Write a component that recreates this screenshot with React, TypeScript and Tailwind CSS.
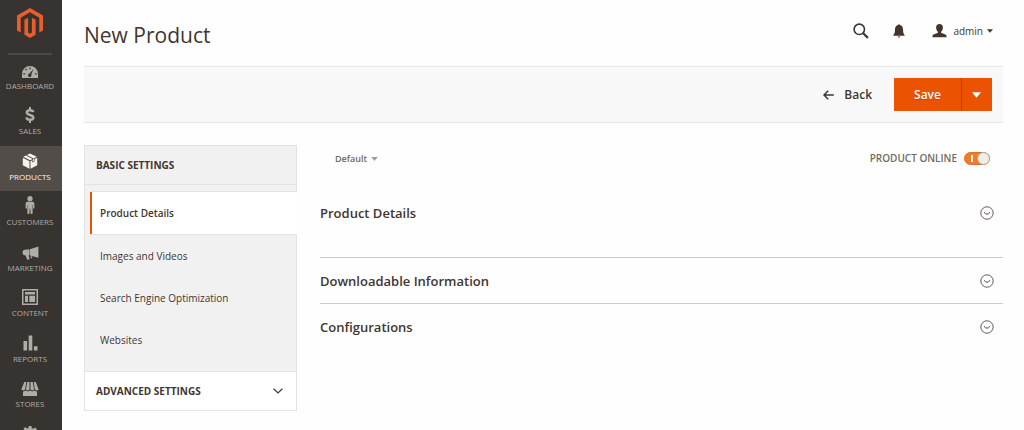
import React, { useState } from "react";

const iconProps = { fill: "currentColor", "aria-hidden": true } as const;

function Logo() {
  return (
    <svg viewBox="0 0 26 30" className="h-[30px] w-[26px]" fill="#eb5d2a" aria-hidden="true">
      <path d="M13 0 26 7.6v14.9l-3.7 2.1V9.7L13 4.3 3.7 9.7v14.9L0 22.5V7.6z" />
      <path d="M7.4 11.8 11.1 9.7v14.9l1.9 1.1 1.9-1.1V9.7l3.7 2.1v14.9L13 30l-5.6-3.3z" />
    </svg>
  );
}

const DashboardIcon = () => (
  <svg {...iconProps} viewBox="0 0 16 12" className="h-3 w-4">
    <path
      fillRule="evenodd"
      d="M0 12V8a8 8 0 0 1 16 0v4zM7.4 1.4v1.8h1.2V1.4zM3 3.4l1.2 1.2.9-.8L3.9 2.6zM1.3 7.3v1.2h1.8V7.3zM12.9 7.3v1.2h1.8V7.3zM11.6 2.7 7.6 7.6a1.7 1.7 0 1 0 1.7 1z"
    />
  </svg>
);

const SalesIcon = () => (
  <svg viewBox="0 0 10 16" className="h-4 w-2.5" fill="none" stroke="currentColor" strokeWidth="2.6" aria-hidden="true">
    <path d="M8.2 5.200C8 3.700 7 3.200 5 3.200S1.800 3.900 1.800 5.300C1.800 8.600 8.300 7.200 8.300 10.500c0 1.500-1.300 2.300-3.300 2.300s-3.300-.8-3.500-2.400" />
    <path d="M5 0v3.500M5 12.500V16" strokeWidth="2" />
  </svg>
);

const ProductsIcon = () => (
  <svg {...iconProps} viewBox="0 0 16 16" className="h-4 w-4">
    <path d="M.8 4.8 7.5 8.2v7.6L.8 12.2zM15.2 4.8 8.5 8.2v7.6l6.7-3.6z" />
    <path d="M1.3 3.8 3.9 2.5l6.8 3.4L8 7.3zM4.9 2 8 .4l6.7 3.4-3 1.6z" />
    <path d="M10.4 6.4 12.8 5v3.3l-2.4 1.3z" fill="#524d49" />
    <path d="M11.1 6.3 12.3 5.6v2.3l-1.2.7z" />
  </svg>
);

const CustomersIcon = () => (
  <svg {...iconProps} viewBox="0 0 10 18" className="h-[18px] w-2.5">
    <circle cx="5" cy="2.7" r="2.6" />
    <path d="M2.4 5.8h5.2C8.8 5.8 9.4 7 9.4 8v3.900c0 .8-1.300.8-1.400 0V9h-.4v8.200c0 1-2 1-2.100 0l-.2-4.800h-.6l-.2 4.800c-.1 1-2.100 1-2.100 0V9H2v2.900c-.1.8-1.400.8-1.400 0V8c0-1 .6-2.200 1.800-2.200z" />
  </svg>
);

const MarketingIcon = () => (
  <svg {...iconProps} viewBox="0 0 17 14" className="h-3.5 w-[17px]">
    <path d="M16.4.4v11.400L8 9.400V3.200zM7.500 3.300v6H2.800C-.2 9.200-.2 3.800 2.800 3.800zM3.600 9.300h3l1 4.300H5z" />
    <path d="M8.400 10.100l2 .6-.6 1.500H8.900z" />
  </svg>
);

const ContentIcon = () => (
  <svg {...iconProps} viewBox="0 0 16 16" className="h-4 w-4">
    <path fillRule="evenodd" d="M0 0h16v16H0zM1.5 1.5v13h13v-13zM3 3h10v2.6H3zM3 6.8h3V13H3zM7.3 6.8H13V13H7.3z" />
  </svg>
);

const ReportsIcon = () => (
  <svg {...iconProps} viewBox="0 0 15 16" className="h-4 w-[15px]">
    <path d="M.5 6h3.6v9.6H.5zM5.7.4h3.6v15.2H5.7zM10.9 11.2h3.6v4.4h-3.6z" />
  </svg>
);

const StoresIcon = () => (
  <svg {...iconProps} viewBox="0 0 18 14" className="h-3.5 w-[18px]">
    <path d="M3.3 0h2L4.2 7.1c-.3 1.700-3.600 1.900-3.800.2zM6.300 0h2.200v7.100c0 1.700-3.500 1.700-3.500 0zM9.500 0h2.200l1.300 7.100c0 1.700-3.500 1.700-3.500 0zM12.700 0h2l2.900 7.300c-.2 1.700-3.500 1.500-3.800-.2z" />
    <path d="M2 9.400c1 .1 2-.2 2.700-.8 1.100 1 3.100 1.100 4.300 0 1.200 1.100 3.200 1 4.300 0 .7.6 1.700.9 2.700.8V14H2z" />
  </svg>
);

const SystemIcon = () => (
  <svg {...iconProps} viewBox="0 0 16 16" className="h-4 w-4">
    <path
      fillRule="evenodd"
      d="M6.700 0h2.600l.5 2.300 1.300.5 2-1.300 1.800 1.800-1.300 2 .5 1.300 2.300.5v2.600l-2.300.5-.5 1.300 1.300 2-1.800 1.800-2-1.300-1.300.5-.5 2.300H6.700l-.5-2.300-1.300-.5-2 1.300-1.800-1.800 1.300-2-.5-1.300L0 9.300V6.700l2.300-.5.5-1.300-1.300-2 1.800-1.800 2 1.300 1.300-.5zM8 5.300a2.700 2.700 0 1 0 0 5.400 2.700 2.700 0 0 0 0-5.400z"
    />
  </svg>
);

const menu = [
  { name: "Dashboard", Icon: DashboardIcon },
  { name: "Sales", Icon: SalesIcon },
  { name: "Products", Icon: ProductsIcon, active: true },
  { name: "Customers", Icon: CustomersIcon },
  { name: "Marketing", Icon: MarketingIcon },
  { name: "Content", Icon: ContentIcon },
  { name: "Reports", Icon: ReportsIcon },
  { name: "Stores", Icon: StoresIcon },
  { name: "System", Icon: SystemIcon, iconOnly: true },
];

function Sidebar() {
  return (
    <nav className="sticky top-0 flex h-screen w-[62px] shrink-0 flex-col overflow-hidden bg-[#373330]" aria-label="Main">
      <a href="#" aria-label="Home" className="mr-2.5 ml-2 flex h-[55px] shrink-0 justify-center border-b-2 border-[#4b4744] pt-2">
        <Logo />
      </a>
      <ul className="grid h-[409px] shrink-0 auto-rows-fr">
        {menu.map(({ name, Icon, active, iconOnly }) => (
          <li key={name}>
            <a
              href="#"
              aria-label={name}
              className={
                "flex h-full flex-col items-center pr-0.5 text-[8px] leading-[14px] uppercase " +
                (active ? "bg-[#524d49] text-[#f7f3eb]" : "text-[#b0aca6]")
              }
            >
              <span className="flex h-6 items-end justify-center pb-px">
                <Icon />
              </span>
              {!iconOnly && name}
            </a>
          </li>
        ))}
      </ul>
    </nav>
  );
}

const Caret = ({ className }: { className: string }) => (
  <svg {...iconProps} viewBox="0 0 10 6" className={className}>
    <path d="M0 0h10L5 6z" />
  </svg>
);

function Header() {
  return (
    <header className="flex h-[66px] items-start justify-between pr-2.5">
      <h1 className="pt-[21px] text-[21px] leading-7 text-[#41362f]">New Product</h1>
      <div className="flex h-[62px] items-center text-[#41362f]">
        <button type="button" aria-label="Search">
          <svg viewBox="0 0 16 16" className="h-4 w-4" fill="none" stroke="currentColor" aria-hidden="true">
            <circle cx="6.300" cy="6.300" r="5.200" strokeWidth="1.600" />
            <path d="m10.200 10.200 4.700 4.700" strokeWidth="2.200" />
          </svg>
        </button>
        <button type="button" aria-label="Notifications" className="ml-6">
          <svg {...iconProps} viewBox="0 0 12 14" className="h-3.5 w-3">
            <path d="M6 .3c.6 0 .9.300.9.800C9 1.600 9.900 3.200 10 5.200c.1 3 .4 4.500 1.600 5.800v.8H.4V11C1.600 9.700 1.900 8.200 2 5.200c.1-2 1-3.600 3.100-4.100 0-.5.3-.8.9-.8zM4.600 12.400h2.800c-.2 1.500-2.600 1.500-2.800 0z" />
          </svg>
        </button>
        <button type="button" className="ml-[27px] flex items-center text-[10px] leading-4 text-[#41362f]">
          <svg {...iconProps} viewBox="0 0 15 14" className="h-3.5 w-[15px]">
            <path d="M7.500 0c2.200 0 3.400 1.500 3.400 3.500 0 1.900-.8 3.400-1.700 4.100v1.300c2.500.9 5.300 1.300 5.300 3.300v1H.5v-1c0-2 2.800-2.400 5.300-3.300V7.600C4.900 6.900 4.100 5.400 4.100 3.500 4.100 1.500 5.300 0 7.500 0z" />
          </svg>
          <span className="ml-1.5">admin</span>
          <Caret className="ml-1 h-1 w-1.5" />
        </button>
      </div>
    </header>
  );
}

function Toolbar() {
  return (
    <div className="flex h-[57px] items-center justify-end border-y border-[#e6e6e6] bg-[#f8f8f8] pr-[11px]">
      <button type="button" className="flex items-center text-[12px] leading-5 font-semibold text-[#41362f]">
        <svg viewBox="0 0 11 10" className="mr-2.5 h-2.5 w-[11px]" fill="none" stroke="currentColor" strokeWidth="1.500" aria-hidden="true">
          <path d="M5.200.700 1 5l4.200 4.300M1 5h9.800" />
        </svg>
        Back
      </button>
      <div className="ml-[22px] flex h-[33px] text-white">
        <button type="button" className="w-[67px] bg-[#eb5202] text-[12px] leading-5 font-semibold text-shadow-xs">
          Save
        </button>
        <button type="button" aria-label="More save options" className="flex w-[31px] items-center justify-center border-l border-[#b84002] bg-[#eb5202] pr-0.5">
          <Caret className="h-1.5 w-[9px]" />
        </button>
      </div>
    </div>
  );
}

const tabs = ["Product Details", "Images and Videos", "Search Engine Optimization", "Websites"];

function SettingsTabs() {
  const [current, setCurrent] = useState(tabs[0]);
  return (
    <aside className="w-[213px] shrink-0 self-start text-[10px] leading-4 text-[#41362f]">
      <section className="border border-[#e3e3e3] bg-[#f1f1f1]">
        <h2 className="flex h-[39px] items-center border-b border-[#e3e3e3] px-[11px] font-bold">BASIC SETTINGS</h2>
        <ul className="-mr-px pt-1.5 pb-2.5 pl-[5px]">
          {tabs.map((tab) => (
            <li key={tab}>
              <button
                type="button"
                onClick={() => setCurrent(tab)}
                className={
                  "flex w-full items-center pl-2.5 text-left " +
                  (tab === current
                    ? "h-11 border-y border-[#e3e3e3] bg-white font-semibold shadow-[inset_2px_0_0_#eb5202]"
                    : "h-[42px]")
                }
              >
                {tab}
              </button>
            </li>
          ))}
        </ul>
      </section>
      <button
        type="button"
        aria-expanded="false"
        className="flex h-[39px] w-full items-center justify-between border border-t-0 border-[#e3e3e3] bg-white px-[11px] font-bold"
      >
        ADVANCED SETTINGS
        <svg viewBox="0 0 10 6" className="mr-0.5 h-1.5 w-2.5" fill="none" stroke="currentColor" strokeWidth="1.200" aria-hidden="true">
          <path d="m.6.700 4.400 4.300L9.400.700" />
        </svg>
      </button>
    </aside>
  );
}

function Section({ title, className }: { title: string; className: string }) {
  return (
    <section className={className}>
      <button type="button" aria-expanded="false" className="flex h-[45px] w-full items-center justify-between pr-[9px] text-left">
        <span className="text-[13px] leading-5 font-semibold text-[#41362f]">{title}</span>
        <svg viewBox="0 0 14 14" className="h-3.5 w-3.5 text-[#514943]" fill="none" stroke="currentColor" aria-hidden="true">
          <circle cx="7" cy="7" r="6.200" strokeWidth="0.900" />
          <path d="M4 6.300 5.500 7.700Q7 8.700 8.500 7.700L10 6.300" strokeWidth="1" />
        </svg>
      </button>
    </section>
  );
}

function ProductForm() {
  const [online, setOnline] = useState(true);
  return (
    <div className="min-w-0 flex-1">
      <div className="flex h-[45px] items-start justify-between pr-[13px] pl-[15px]">
        <button type="button" className="flex h-7 items-center text-[9px] leading-4 font-semibold text-[#736963]">
          Default
          <Caret className="ml-1 h-1 w-[7px] text-[#a79d95]" />
        </button>
        <label className="flex h-[26px] items-center gap-[7px] text-[10px] leading-4 font-semibold text-[#736963]">
          PRODUCT ONLINE
          <span className="relative flex h-[13px] w-[26px]">
            <input
              type="checkbox"
              checked={online}
              onChange={(e) => setOnline(e.target.checked)}
              className="peer h-full w-full appearance-none rounded-full border border-[#aaa6a0] bg-[#e3e3e3] checked:border-[#cf7434] checked:bg-[#f47b20]"
            />
            <span className="pointer-events-none absolute top-0 left-0 h-[13px] w-[13px] rounded-full border border-[#aaa6a0] bg-[#f1eeea] peer-checked:left-[13px]" />
            <span className="pointer-events-none absolute top-[3px] left-[7px] hidden h-[7px] w-0.5 bg-white peer-checked:block" />
          </span>
        </label>
      </div>
      <Section title="Product Details" className="h-[67px]" />
      <Section title="Downloadable Information" className="border-t border-[#cccccc]" />
      <Section title="Configurations" className="border-t border-[#cccccc]" />
    </div>
  );
}

export default function App() {
  return (
    <div className="flex min-h-screen bg-[#fefefe] font-['Open_Sans',sans-serif]">
      <Sidebar />
      <main className="min-w-0 flex-1 pr-[21px] pl-[22px]">
        <Header />
        <Toolbar />
        <div className="flex gap-[23px] pt-[22px]">
          <SettingsTabs />
          <ProductForm />
        </div>
      </main>
    </div>
  );
}
